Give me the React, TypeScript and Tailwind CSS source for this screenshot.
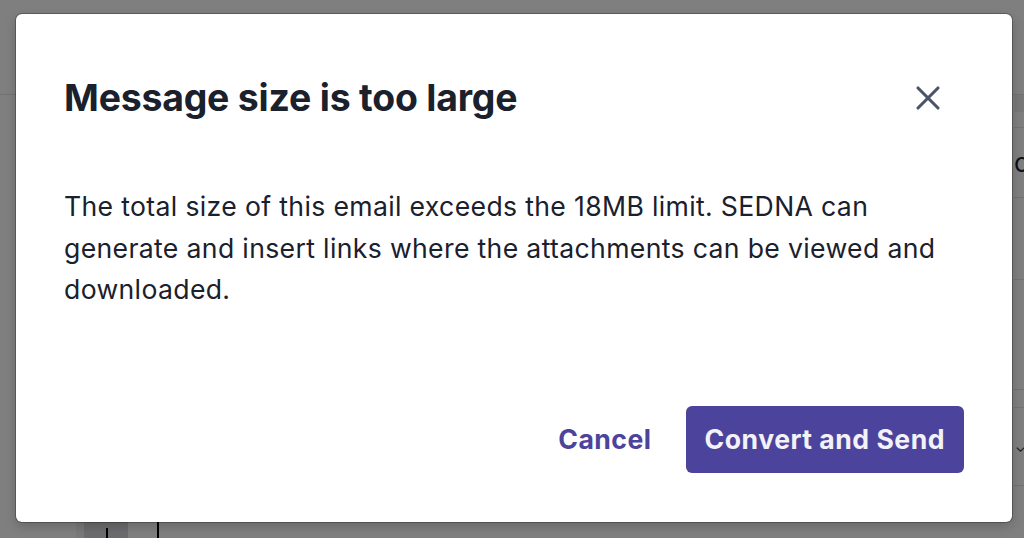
import { X } from 'lucide-react';

export default function App() {
    return (
        <div className="relative h-[538px] w-[1024px] overflow-hidden bg-white font-['Inter','Noto_Sans',sans-serif]">
            {/* Page behind the dialog */}
            <div className="flex h-full flex-col">
                <div className="h-[95px] shrink-0 border-b border-[#e4e4e4]" />
                <div className="flex flex-1">
                    <div className="flex-1" />
                    <div className="w-[10px] shrink-0">
                        <div className="h-[17px] bg-[#f0f0f0]" />
                        <div className="h-[16px] border-b border-[#e4e4e4]" />
                        <div className="flex h-[70px] items-center border-b border-[#e4e4e4] text-[26px] text-[#1a202c]">o</div>
                        <div className="h-[82px] border-b border-[#e4e4e4]" />
                        <div className="h-[110px] border-b border-[#e4e4e4]" />
                        <div className="h-[18px] border-b border-[#e4e4e4]" />
                        <div className="flex h-[78px] items-center border-b border-[#e4e4e4] pl-[1px] text-[14px] text-[#2d3748]">⌄</div>
                    </div>
                </div>
                <div className="flex h-[16px] shrink-0">
                    <div className="w-[76px]" />
                    <div className="w-[8px] bg-[#f2f2f2]" />
                    <div className="relative w-[44px] bg-[#d8d8de]">
                        <div className="absolute bottom-0 left-[22px] h-[10px] w-[2px] bg-black" />
                    </div>
                    <div className="w-[29px]" />
                    <div className="w-[2px] bg-black" />
                </div>
            </div>
            <div className="absolute inset-0 bg-black/50" />

            {/* Dialog */}
            <div className="absolute left-[16px] top-[14px] flex h-[508px] w-[996px] flex-col rounded-[6px] bg-white px-[48px] pb-[49px] pt-[61px] shadow-[0_0_0_1px_rgba(0,0,0,0.25),0_4px_12px_rgba(0,0,0,0.2)]">
                <div className="flex items-center justify-between">
                    <h2 className="text-[37.4px] font-bold leading-[46px] tracking-[-0.2px] text-[#1a202c]">
                        Message size is too large
                    </h2>
                    <button className="mr-[14px] flex h-[44px] w-[44px] items-center justify-center text-[#4a5568]">
                        <X size={40} strokeWidth={1.9} />
                    </button>
                </div>
                <p className="mt-[65px] text-[26.6px] leading-[41.6px] tracking-[0.35px] text-[#1a202c]">
                    The total size of this email exceeds the 18MB limit. SEDNA can generate and insert links where the attachments can be viewed and downloaded.
                </p>
                <div className="mt-auto flex items-center justify-end">
                    <button className="mr-[34px] text-[26.6px] font-bold tracking-[0.5px] text-[#4c449c]">Cancel</button>
                    <button className="h-[67px] rounded-[6px] bg-[#4c449c] px-[19px] text-[26.6px] font-bold tracking-[0.5px] text-[#f2f2f7]">
                        Convert and Send
                    </button>
                </div>
            </div>
        </div>
    );
}
